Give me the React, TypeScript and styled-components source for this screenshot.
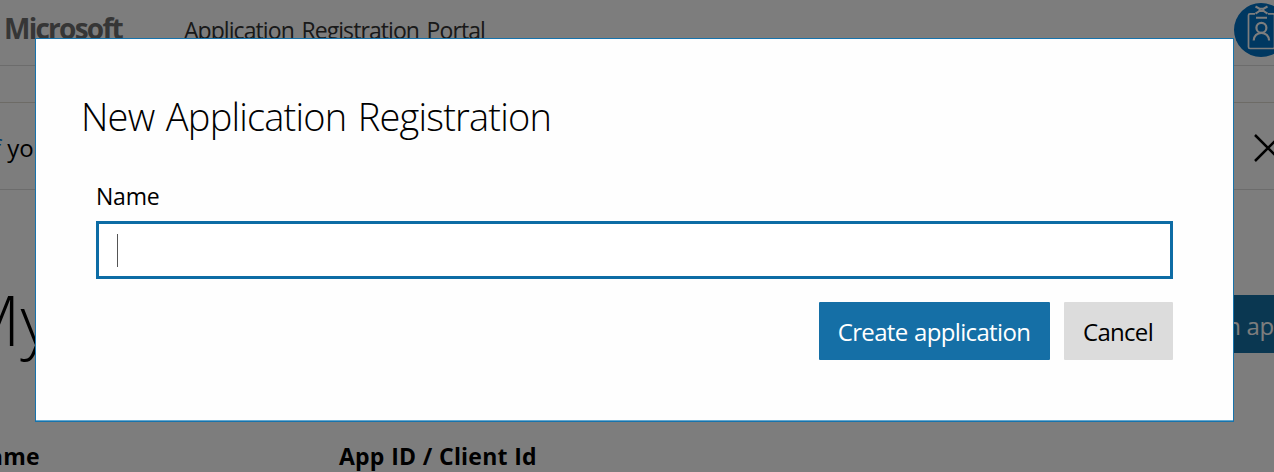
import React from 'react';
import styled, { createGlobalStyle } from 'styled-components';

const GlobalStyle = createGlobalStyle`
  * { box-sizing: border-box; }
  body { margin: 0; font-family: "Open Sans", "Noto Sans", sans-serif; color: #000; }
`;

const Screen = styled.div`
  position: relative;
  width: 1274px;
  height: 472px;
  overflow: hidden;
  background: #fff;
`;

const Text = styled.span<{ $size: number; $weight?: number; $track?: number; $word?: number; $color?: string }>`
  flex: none;
  white-space: pre;
  line-height: 1.25;
  font-size: ${(p) => p.$size}px;
  font-weight: ${(p) => p.$weight ?? 400};
  letter-spacing: ${(p) => p.$track ?? 0}px;
  word-spacing: ${(p) => p.$word ?? 0}px;
  color: ${(p) => p.$color ?? 'inherit'};
`;

const Header = styled.header`
  display: flex;
  align-items: flex-start;
  justify-content: space-between;
  height: 66px;
  padding: 3px 0 0 4px;
  border-bottom: 1px solid #dcdcdc;
`;

const Brand = styled.div`
  display: flex;
  align-items: baseline;
  gap: 62px;
  padding-top: 8px;
`;

const Badge = styled.svg`
  flex: none;
  width: 54px;
  height: 54px;
  margin-right: -14px;
`;

const SubBar = styled.div`
  height: 37px;
  border-bottom: 1px solid #dfdbd0;
`;

const Notice = styled.div`
  display: flex;
  align-items: center;
  justify-content: space-between;
  height: 87px;
  padding-top: 3px;
  border-bottom: 1px solid #dcdcdc;
`;

const NoticeText = styled.div`
  margin-left: -7px;
`;

const CloseIcon = styled.svg`
  flex: none;
  width: 28px;
  height: 28px;
  margin-right: -8px;
`;

const TitleRow = styled.div`
  display: flex;
  align-items: flex-start;
  justify-content: space-between;
  height: 250px;
  padding-top: 85px;
`;

const PageTitle = styled.h1`
  display: flex;
  margin: 1px 0 0 -40px;
  font-weight: 300;
`;

const AddButton = styled.button`
  display: flex;
  align-items: center;
  justify-content: flex-end;
  width: 240px;
  height: 58px;
  margin-top: 20px;
  padding: 3px 0 0;
  border: 0;
  font-family: inherit;
  background: #1570a6;
`;

const TableHead = styled.div`
  display: grid;
  grid-template-columns: 369px 1fr;
  padding-top: 2px;
  margin-left: -30px;
`;

const Overlay = styled.div`
  position: absolute;
  inset: 0;
  background: rgba(0, 0, 0, 0.51);
`;

const Dialog = styled.section`
  position: absolute;
  left: 35px;
  top: 38px;
  width: 1199px;
  height: 384px;
  padding: 54px 60px 0 60px;
  border: 1px solid #1773ac;
  box-shadow: inset 0 -1px 0 #62a8d0;
  background: #fefefe;
`;

const DialogTitle = styled.h2`
  display: flex;
  margin: 0 0 0 -15px;
  font-weight: 300;
`;

const Field = styled.label`
  display: flex;
  flex-direction: column;
  gap: 11px;
  margin-top: 41px;
`;

const InputBox = styled.div`
  display: flex;
  align-items: center;
  width: 1077px;
  height: 58px;
  padding-left: 18px;
  border: 3px solid #0d6ca5;
  background: #fff;
`;

const Caret = styled.i`
  width: 1px;
  height: 33px;
  background: #555;
`;

const Actions = styled.div`
  display: flex;
  justify-content: flex-end;
  gap: 14px;
  width: 1077px;
  margin-top: 23px;
`;

const Button = styled.button<{ $primary?: boolean }>`
  display: flex;
  align-items: center;
  justify-content: center;
  width: ${(p) => (p.$primary ? 231 : 109)}px;
  height: 58px;
  padding: 2px 1px 0 0;
  border: 0;
  border-radius: 1px;
  font-family: inherit;
  color: ${(p) => (p.$primary ? '#fff' : '#000')};
  background: ${(p) => (p.$primary ? '#156fa6' : '#dcdcdc')};
`;

export default function App() {
  return (
    <Screen>
      <GlobalStyle />
      <Header>
        <Brand>
          <Text $size={28} $weight={700} $track={-1.75} $color="#6e6e6e">Microsoft</Text>
          <Text $size={23} $track={-0.92} $word={2.5} $color="#333">Application Registration Portal</Text>
        </Brand>
        <Badge viewBox="0 0 54 54" fill="none" stroke="#fff" strokeWidth="1.7">
          <circle cx="27" cy="27" r="27" fill="#0072c6" stroke="none" />
          <path d="M21 10.800h-5a1.500 1.500 0 0 0-1.500 1.500v31.700a1.500 1.500 0 0 0 1.500 1.500h23a1.500 1.500 0 0 0 1.500-1.500V12.300a1.500 1.500 0 0 0-1.500-1.500h-5" />
          <path d="M21.500 3.500l4 2.200h4l4-2.200M21.500 10.600l4-2.600h4l4 2.600M25.500 5.500v3M29.500 5.500v3M22 14.800h11" strokeWidth="2" />
          <circle cx="27.400" cy="24.800" r="5" strokeWidth="2.2" />
          <path d="M19.700 37.500a7.700 7.700 0 0 1 15.400 0" strokeWidth="2.2" />
        </Badge>
      </Header>
      <SubBar />
      <Notice>
        <NoticeText>
          <Text $size={24} $color="#0078d7">f</Text>
          <Text $size={24}> you</Text>
        </NoticeText>
        <CloseIcon viewBox="0 0 28 28" stroke="#000" strokeWidth="2.5">
          <path d="M1 1l26 26M27 1L1 27" />
        </CloseIcon>
      </Notice>
      <TitleRow>
        <PageTitle><Text $size={70} $weight={300} $track={0}>My</Text></PageTitle>
        <AddButton><Text $size={24} $track={-0.3} $color="#fff">Add an ap</Text></AddButton>
      </TitleRow>
      <TableHead>
        <Text $size={23} $weight={700} $track={0.3}>Name</Text>
        <Text $size={23} $weight={700} $track={0.2} $word={0.4}>App ID / Client Id</Text>
      </TableHead>
      <Overlay />
      <Dialog>
        <DialogTitle><Text $size={38} $weight={300} $track={-0.82} $word={2.5}>New Application Registration</Text></DialogTitle>
        <Field>
          <Text $size={23} $track={-0.2}>Name</Text>
          <InputBox><Caret /></InputBox>
        </Field>
        <Actions>
          <Button $primary><Text $size={24} $track={-0.65} $word={0.8}>Create application</Text></Button>
          <Button><Text $size={24} $track={-0.7}>Cancel</Text></Button>
        </Actions>
      </Dialog>
    </Screen>
  );
}
